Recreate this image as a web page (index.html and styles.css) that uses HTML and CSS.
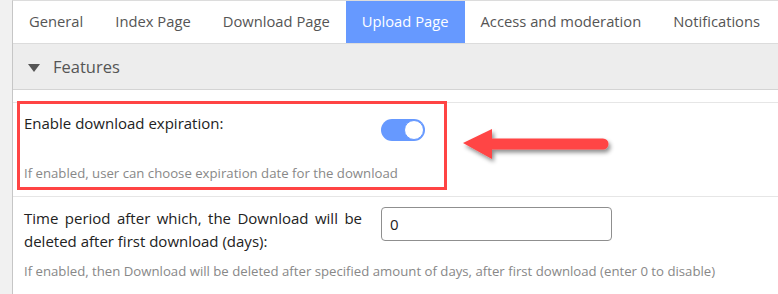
FILE: index.html
```html
<!DOCTYPE html>
<html>
<head>
<meta charset="utf-8">
<link rel="stylesheet" href="styles.css">
</head>
<body>
<div class="page">
  <div class="panel">
    <nav class="tabs">
      <span class="tab">General</span>
      <span class="tab">Index Page</span>
      <span class="tab">Download Page</span>
      <span class="tab active">Upload Page</span>
      <span class="tab">Access and moderation</span>
      <span class="tab">Notifications</span>
    </nav>
    <div class="section-head">
      <span class="caret"></span>
      <span class="section-title">Features</span>
    </div>
    <div class="content">
      <div class="row row-first">
        <div class="grid">
          <div class="label">Enable download expiration:</div>
          <div class="field"><span class="toggle"><span class="knob"></span></span></div>
        </div>
        <div class="desc desc-first">If enabled, user can choose expiration date for the download</div>
        <div class="highlight"></div>
        <svg class="arrow" width="170" height="50" viewBox="0 0 170 50">
          <defs>
            <filter id="sh" x="-20%" y="-50%" width="140%" height="200%">
              <feDropShadow dx="2" dy="3" stdDeviation="2" flood-color="#000" flood-opacity="0.45"/>
            </filter>
          </defs>
          <g filter="url(#sh)" fill="#ff4444">
            <path d="M8 18 L37 4 L37 34 Z"/>
            <path d="M34 13.5 L148 13.5 A5 5 0 0 1 148 24.5 L34 24.5 Z"/>
          </g>
        </svg>
      </div>
      <div class="row row-second">
        <div class="grid">
          <div class="label label-justify">Time period after which, the Download will be deleted after first download (days):</div>
          <div class="field"><input class="input" type="text" value="0"></div>
        </div>
        <div class="desc desc-second">If enabled, then Download will be deleted after specified amount of days, after first download (enter 0 to disable)</div>
      </div>
    </div>
  </div>
</div>
</body>
</html>
```

FILE: styles.css
```css
html, body {
  margin: 0;
  padding: 0;
  height: 100%;
  overflow: hidden;
}
body {
  font-family: "Open Sans", "Noto Sans", sans-serif;
  background: #f1f1f1;
}
.page {
  display: flex;
  height: 100%;
  padding-left: 12px;
}
.panel {
  flex: 1;
  background: #fff;
  border-left: 1px solid #c6c6c6;
  border-top: 1px solid #dcdcdc;
}
.tabs {
  display: flex;
  height: 42px;
  border-bottom: 1px solid #dcdcdc;
}
.tab {
  padding: 0 16px;
  line-height: 41px;
  font-size: 14.75px;
  color: #555;
  white-space: nowrap;
}
.tab.active {
  background: #6699ff;
  color: #fff;
}
.section-head {
  display: flex;
  align-items: center;
  height: 45px;
  background: #ededed;
  border-bottom: 1px solid #d4d4d4;
  padding-left: 15px;
}
.caret {
  width: 0;
  height: 0;
  border-left: 6px solid transparent;
  border-right: 6px solid transparent;
  border-top: 8px solid #555;
  margin-top: 2px;
}
.section-title {
  margin-left: 13px;
  font-size: 16.5px;
  color: #555;
}
.content {
  padding-top: 12px;
}
.row {
  position: relative;
  border-top: 1px solid #e6e6e6;
  padding-left: 11px;
}
.row-first {
  padding-top: 9px;
  padding-bottom: 14px;
}
.row-second {
  padding-top: 10px;
}
.grid {
  display: grid;
  grid-template-columns: 338px 1fr;
  column-gap: 19px;
}
.label {
  font-size: 15px;
  line-height: 23px;
  color: #222;
}
.label-justify {
  text-align: justify;
}
.toggle {
  display: block;
  position: relative;
  width: 44px;
  height: 22px;
  margin-top: 7px;
  border-radius: 11px;
  background: #6699ff;
}
.knob {
  position: absolute;
  top: 1px;
  right: 1px;
  width: 20px;
  height: 20px;
  border-radius: 50%;
  background: #fff;
  border: 1px solid #6699ff;
  box-sizing: border-box;
}
.desc {
  font-size: 13.2px;
  line-height: 18px;
  color: #888;
}
.desc-first {
  margin-top: 23px;
}
.desc-second {
  margin-top: 9px;
}
.input {
  display: block;
  box-sizing: border-box;
  width: 231px;
  height: 34px;
  border: 1px solid #8f8f8f;
  border-radius: 4px;
  padding: 0 8px;
  font-family: inherit;
  font-size: 15px;
  color: #222;
  margin: 0;
}
.highlight {
  position: absolute;
  left: 4px;
  top: -2px;
  width: 430px;
  height: 89px;
  border: 3px solid #ff4444;
  box-sizing: border-box;
}
.arrow {
  position: absolute;
  left: 442px;
  top: 22px;
}
```
